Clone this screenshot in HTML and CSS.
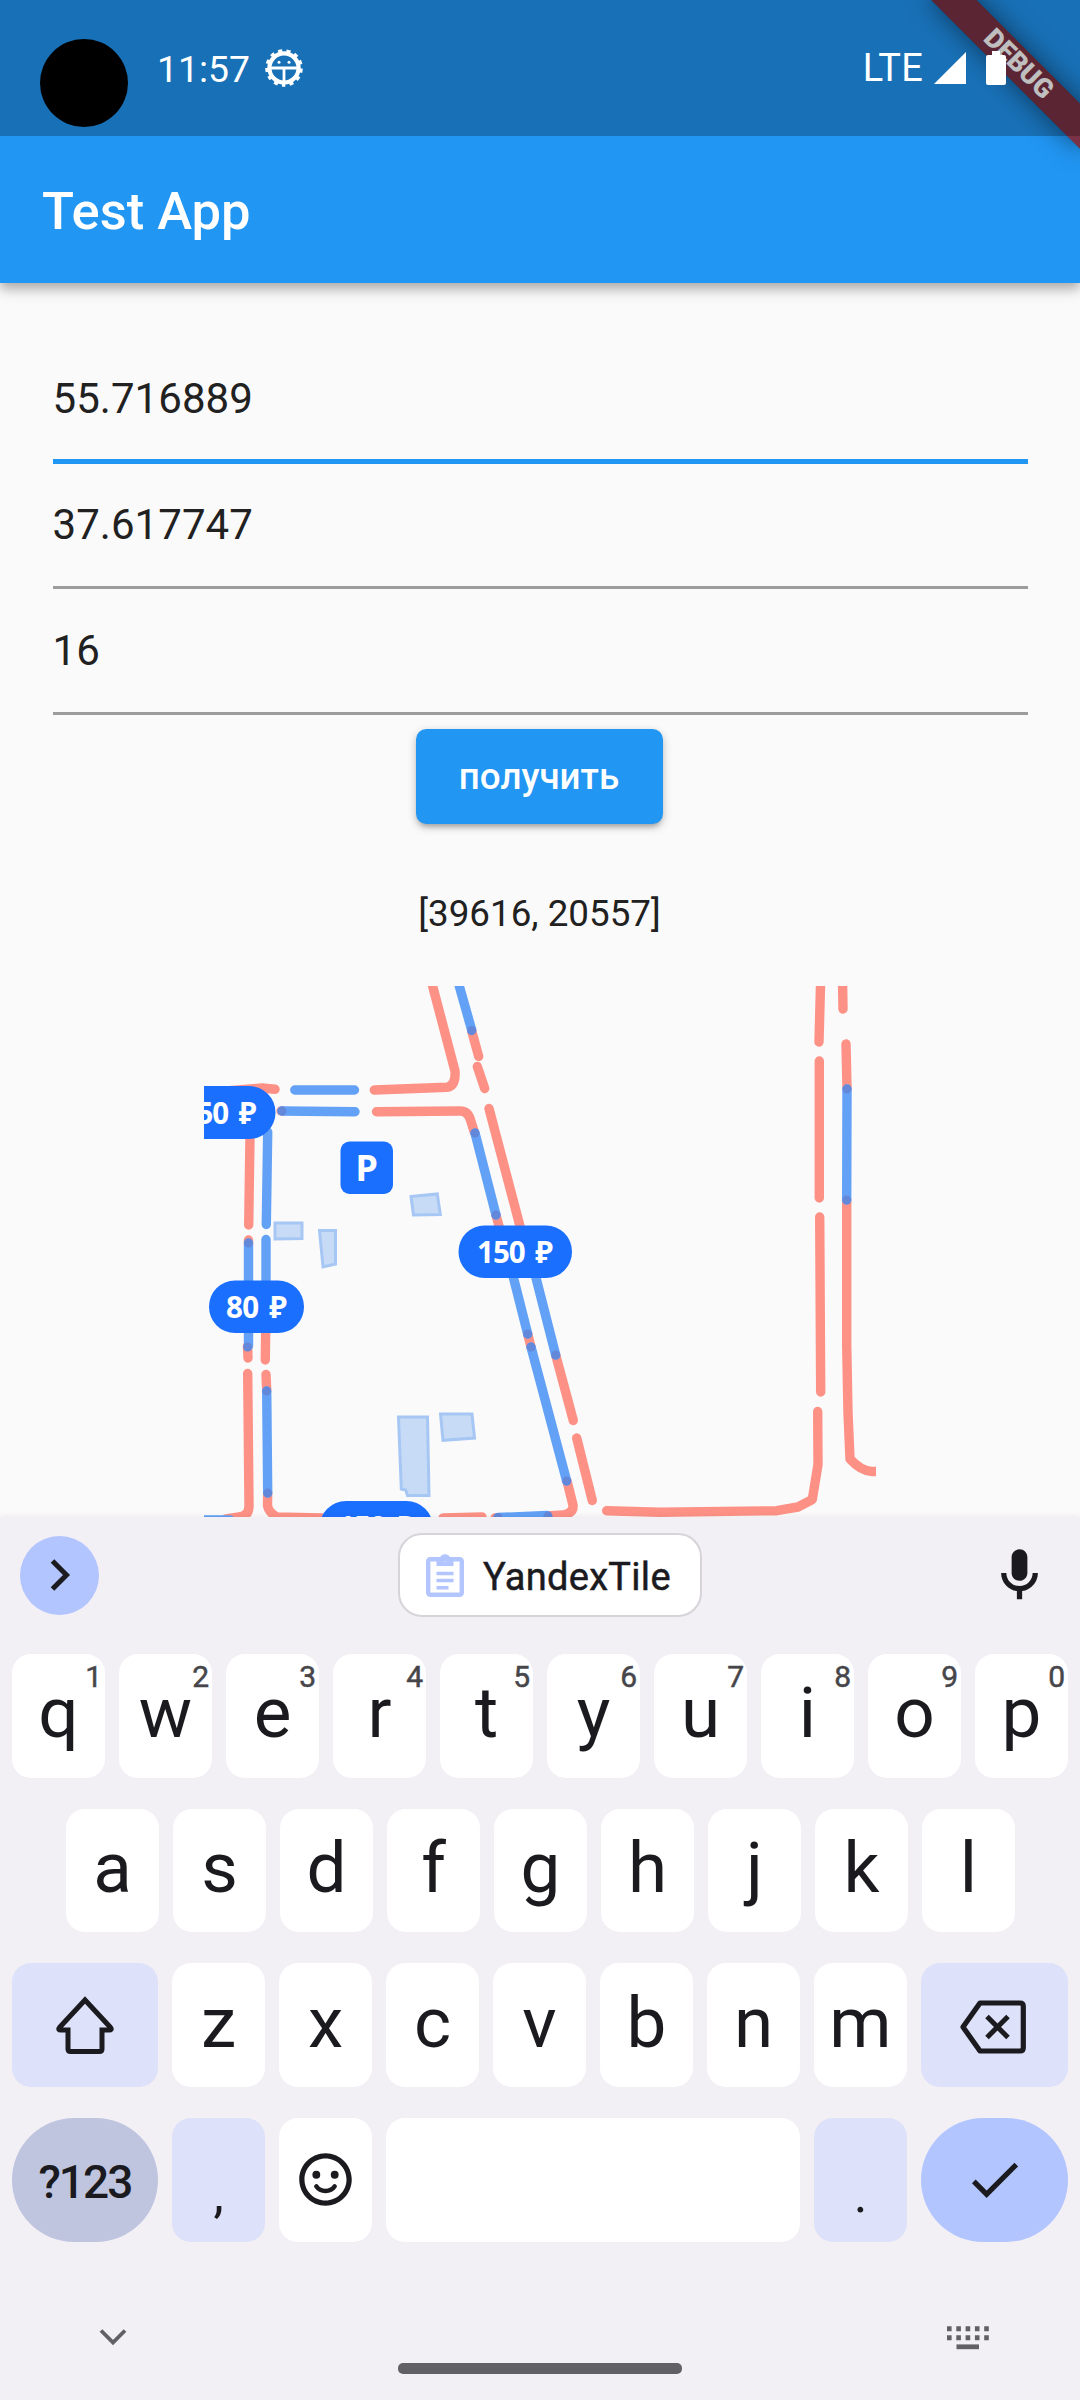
FILE: index.html
```html
<!DOCTYPE html>
<html lang="ru">
<head>
<meta charset="utf-8">
<title>Test App</title>
<link rel="stylesheet" href="styles.css">
</head>
<body>
<div class="screen">
  <header class="header">
    <div class="debug"><span>DEBUG</span></div>
    <div class="statusbar">
      <div class="camera"></div>
      <span class="clock">11:57</span>
      <svg class="gear" viewBox="-19 -19 38 38" width="38" height="38">
        <circle r="14.6" fill="none" stroke="#fff" stroke-width="4.2"/>
        <circle r="17" fill="none" stroke="#fff" stroke-width="3.6" stroke-dasharray="4 4.216" stroke-dashoffset="2" transform="rotate(90)"/>
        <path d="M-13 0H13M0 0V14" stroke="#fff" stroke-width="2.8"/>
        <circle cx="-5" cy="-5.8" r="1.5" fill="#fff"/><circle cx="5" cy="-5.8" r="1.5" fill="#fff"/>
      </svg>
      <span class="lte">LTE</span>
      <svg class="signal" viewBox="0 0 32 32" width="32" height="32"><path d="M32 0V32H0z" fill="#fff"/></svg>
      <svg class="battery" viewBox="0 0 20 34" width="20" height="34"><path d="M6 0h8v4h4q2 0 2 2v26q0 2-2 2H2q-2 0-2-2V6q0-2 2-2h4z" fill="#fff"/></svg>
    </div>
    <h1 class="title">Test App</h1>
  </header>

  <main class="content">
    <div class="field focused">55.716889</div>
    <div class="field">37.617747</div>
    <div class="field">16</div>
    <button class="button">получить</button>
    <p class="result">[39616, 20557]</p>
    <svg class="map" viewBox="204 986 672 531" width="672" height="531">
      <g class="building">
        <path d="M411 1196.500L437.300 1194L440.300 1214.500L413.500 1215z"/>
        <path d="M275 1223H302V1238.500L275 1239z"/>
        <path d="M319.500 1230.500H335.500V1264L323 1267z"/>
        <path d="M398.500 1417H427.500L429 1495.500H407.500L405.700 1490L401.300 1489z"/>
        <path d="M440.500 1414H472L474.500 1438L443 1440.300z"/>
      </g>
      <g class="closed">
        <path d="M430.500 978L455 1071Q456 1086 446.700 1087.300L374.300 1090"/>
        <path d="M471.700 1031L478.700 1056.500M477.300 1066.500L484.700 1088.500"/>
        <path d="M226 1091L262 1088L275 1089.300M281 1111H283"/>
        <path d="M376.500 1111.700L460 1111Q468 1111 470.500 1120L474.300 1132M496 1215L499 1226"/>
        <path d="M489 1108.500L521 1230"/>
        <path d="M250 1136L248.700 1225M248.500 1240V1244M247.500 1346L248 1358M265.700 1330L265.300 1360"/>
        <path d="M247.700 1373.500L249 1506Q249 1516 239 1517L226 1519"/>
        <path d="M266 1374.500L266.700 1390M267.700 1493L267.500 1505Q268 1512 277 1517L322 1518"/>
        <path d="M443 1518L482 1517M495 1518H498M547 1516L563 1515Q574 1513 573 1505L567 1481"/>
        <path d="M527.700 1334L531 1347M555.700 1355L573.300 1420.500M576.700 1438L592.300 1500.500"/>
        <path d="M606.700 1510.700L660 1512.300L776.700 1510.700L798 1507L812.300 1499.500L818 1464.600L817.700 1411.500"/>
        <path d="M820.700 978L819 1042M819.300 1061V1198M819.700 1217L820.700 1392"/>
        <path d="M842.500 978L843 1009M846 1044L847 1088M846.700 1200V1345L848 1413L850 1459Q861 1471 872 1471.500H885"/>
      </g>
      <g class="parking">
        <path d="M457 978L471.700 1030M294.800 1090H354.500M282 1111L355 1111.700M475 1133L496 1215"/>
        <path d="M267.700 1132L266.300 1224.500M266 1239.500V1290M248.500 1243V1346"/>
        <path d="M266.700 1391L267.700 1493M195 1520H230M498 1517.500L547 1515.500"/>
        <path d="M566.700 1481L531 1347M527.700 1334L512 1272M534.500 1272L555.700 1355M847 1089L846.700 1200"/>
      </g>
      <g class="joint">
        <circle cx="471.700" cy="1030.500" r="4.500"/><circle cx="282" cy="1111" r="4.500"/><circle cx="475" cy="1133" r="4.500"/><circle cx="496" cy="1215" r="4.500"/><circle cx="248.500" cy="1243" r="4.500"/><circle cx="247.600" cy="1347" r="4.500"/><circle cx="266.700" cy="1391" r="4.500"/><circle cx="267.700" cy="1493" r="4.500"/><circle cx="566.700" cy="1481" r="4.500"/><circle cx="531" cy="1347" r="4.500"/><circle cx="527.700" cy="1334" r="4.500"/><circle cx="555.700" cy="1355" r="4.500"/><circle cx="847" cy="1089" r="4.500"/><circle cx="846.700" cy="1200" r="4.500"/><circle cx="498" cy="1517.500" r="4.500"/><circle cx="548" cy="1516" r="4.500"/>
      </g>
      <g class="badge">
        <rect x="162" y="1086" width="113.500" height="53" rx="26.500"/>
        <rect x="340.500" y="1141.500" width="52.500" height="52.500" rx="9"/>
        <rect x="458.500" y="1225.500" width="113.500" height="52.500" rx="26"/>
        <rect x="209" y="1280.500" width="95" height="52.500" rx="26"/>
        <rect x="319.500" y="1501" width="113.500" height="53" rx="26.500"/>
      </g>
      <g class="price">
        <text x="180.500" y="1123.500" textLength="76">150 ₽</text>
        <text x="477" y="1263" textLength="76">150 ₽</text>
        <text x="226" y="1318" textLength="61">80 ₽</text>
        <text x="338" y="1538" textLength="76">150 ₽</text>
        <text class="p" x="355.500" y="1181">P</text>
      </g>
    </svg>
  </main>

  <section class="keyboard">
    <div class="toolbar">
      <div class="expand"><svg viewBox="0 0 24 36" width="24" height="36"><path d="M4.500 4L18.500 18L4.500 32" fill="none" stroke="#1b1b1f" stroke-width="5"/></svg></div>
      <div class="chip">
        <svg viewBox="0 0 38 46" width="38" height="46"><rect x="2.200" y="7.200" width="33.600" height="35.600" rx="2" fill="none" stroke="#b2c5ff" stroke-width="4.400"/><path fill-rule="evenodd" d="M10.500 6h3.300a5.500 5.500 0 0 1 10.400 0h3.300v8h-17zM19 5.200a2.200 2.200 0 1 0 0 4.400a2.200 2.200 0 1 0 0-4.400z" fill="#b2c5ff"/><path d="M10.500 21.500h17M10.500 28.500h17M10.500 35.700h12" stroke="#b2c5ff" stroke-width="3.600"/></svg>
        <span>YandexTile</span>
      </div>
      <svg class="mic" viewBox="0 0 24 24" width="63" height="63"><path d="M12 14c1.660 0 3-1.340 3-3V5c0-1.660-1.340-3-3-3S9 3.340 9 5v6c0 1.660 1.340 3 3 3zM17 11c0 2.760-2.240 5-5 5s-5-2.240-5-5H5c0 3.530 2.610 6.430 6 6.920V21h2v-3.080c3.390-.49 6-3.390 6-6.920h-2z" fill="#1b1b1f"/></svg>
    </div>
    <div class="row">
      <div class="key">q<i>1</i></div><div class="key">w<i>2</i></div><div class="key">e<i>3</i></div><div class="key">r<i>4</i></div><div class="key">t<i>5</i></div><div class="key">y<i>6</i></div><div class="key">u<i>7</i></div><div class="key">i<i>8</i></div><div class="key">o<i>9</i></div><div class="key">p<i>0</i></div>
    </div>
    <div class="row inset">
      <div class="key">a</div><div class="key">s</div><div class="key">d</div><div class="key">f</div><div class="key">g</div><div class="key">h</div><div class="key">j</div><div class="key">k</div><div class="key">l</div>
    </div>
    <div class="row">
      <div class="key wide tint shift"><svg viewBox="0 0 62 60" width="62" height="60"><path d="M31 5L5.500 32.500Q3.500 35 7 35H14V54Q14 56.500 16.500 56.500H45.500Q48 56.500 48 54V35H55Q58.500 35 56.500 32.500z" fill="none" stroke="#1b1b1f" stroke-width="5"/></svg></div>
      <div class="key">z</div><div class="key">x</div><div class="key">c</div><div class="key">v</div><div class="key">b</div><div class="key">n</div><div class="key">m</div>
      <div class="key wide tint backspace"><svg viewBox="0 0 66 54" width="66" height="54"><path d="M20 3H60Q63.300 3 63.300 6.300V47.700Q63.300 51 60 51H20L3 27z" fill="none" stroke="#1b1b1f" stroke-width="5.200" stroke-linejoin="round"/><path d="M27 16.500L48 37.500M48 16.500L27 37.500" stroke="#1b1b1f" stroke-width="5"/></svg></div>
    </div>
    <div class="row">
      <div class="key wide symbols">?123</div>
      <div class="key tint punct">,</div>
      <div class="key"><svg viewBox="0 0 24 24" width="63" height="63"><path d="M11.990 2C6.470 2 2 6.480 2 12s4.470 10 9.990 10C17.520 22 22 17.520 22 12S17.520 2 11.990 2zM12 20c-4.420 0-8-3.580-8-8s3.580-8 8-8 8 3.580 8 8-3.580 8-8 8z" fill="#1b1b1f"/><circle cx="8.500" cy="10.200" r="1.500" fill="#1b1b1f"/><circle cx="15.500" cy="10.200" r="1.500" fill="#1b1b1f"/><path d="M8.500 14.600Q9.700 16.400 12 16.400T15.500 14.600" fill="none" stroke="#1b1b1f" stroke-width="1.700" stroke-linecap="round"/></svg></div>
      <div class="key space"></div>
      <div class="key tint punct">.</div>
      <div class="key wide enter"><svg viewBox="0 0 24 24" width="63" height="63"><path d="M9 16.170L4.830 12l-1.420 1.410L9 19 21 7l-1.410-1.410z" fill="#1b1b1f"/></svg></div>
    </div>
    <div class="navbar">
      <svg viewBox="0 0 28 18" width="28" height="18"><path d="M2 2.500L14 14.500L26 2.500" fill="none" stroke="#616163" stroke-width="3.800"/></svg>
      <div class="handle"></div>
      <svg class="ime" viewBox="0 0 42 24" width="42" height="24"><path d="M0 2.800H42M0 11.800H42" stroke="#616163" stroke-width="5" stroke-dasharray="4.600 4.700"/><path d="M9.500 20.800H32" stroke="#616163" stroke-width="4.800"/></svg>
    </div>
  </section>
</div>
</body>
</html>
```
FILE: styles.css
```css
* { box-sizing: border-box; }
body { margin: 0; background: #fafafa; font-family: Roboto, "Noto Sans", sans-serif; }
.screen { width: 1080px; height: 2400px; display: flex; flex-direction: column; overflow: hidden; background: #fafafa; }

.header { position: relative; z-index: 1; flex: none; height: 283px; background: #2196f3; box-shadow: 0 5px 10px rgba(0,0,0,.24), 0 9px 14px rgba(0,0,0,.1); clip-path: inset(0 0 -40px 0); }
.statusbar { position: relative; height: 136px; display: flex; align-items: center; padding: 0 74px 0 40px; background: rgba(0,0,0,.25); color: #fff; font-size: 37.3px; }
.camera { flex: none; width: 88px; height: 88px; margin: 30px 29px 0 0; border-radius: 50%; background: #000; }
.clock { width: 93px; margin-right: 15px; padding-top: 1px; }
.gear { margin-right: auto; }
.lte { margin-right: 11px; font-size: 38px; letter-spacing: .2px; }
.signal { margin-right: 20px; }
.title { margin: 0; padding: 2px 0 0 42px; font-size: 52.5px; line-height: 147px; font-weight: 500; color: #fff; }

/* corner ribbon */
.debug { position: absolute; top: 47px; left: 912px; width: 210px; height: 31.5px; padding-left: 4px; background: linear-gradient(rgba(183,28,28,.63), rgba(183,28,28,.63)), rgba(0,0,0,.42); box-shadow: 0 0 26px rgba(0,0,0,.5); transform: rotate(45deg); color: #fff; font-size: 26.8px; line-height: 31.5px; font-weight: 900; text-align: center; }

.content { flex: none; height: 1234px; display: flex; flex-direction: column; align-items: center; padding-top: 54px; overflow: hidden; }
.field { flex: none; width: 975px; height: 126px; padding-top: 37px; border-bottom: 3px solid #9c9c9c; font-size: 42px; line-height: 50px; letter-spacing: .05px; color: #212121; }
.field.focused { height: 127px; margin-bottom: -1px; padding-top: 37px; border-bottom: 5px solid #2196f3; }
.button { flex: none; width: 247px; height: 95px; margin: 14px 1px 0 0; padding: 1px 1px 0 0; border: 0; border-radius: 10.5px; background: #2196f3; box-shadow: 0 5px 5px -3px rgba(0,0,0,.2), 0 3px 8px rgba(0,0,0,.25); color: #fff; font: 500 36.75px/94px Roboto, sans-serif; }
.result { margin: 68px 1px 0 0; font-size: 36.75px; line-height: 44px; color: #212121; }
.map { flex: none; display: block; margin-top: 50px; }
.building path { fill: #c8dbf6; stroke: #a6c7f3; stroke-width: 3; }
.closed path, .parking path { fill: none; stroke-width: 9.4; stroke-linecap: round; stroke-linejoin: round; }
.closed path { stroke: #fd9186; }
.parking path { stroke: #62a1f6; }
.joint { fill: #6488d9; }
.badge { fill: #1b6fff; }
.price { fill: #fff; font: 700 29.5px "Noto Sans", "Open Sans", sans-serif; word-spacing: 4px; }
.price .p { font-size: 36px; font-weight: 700; }

.keyboard { flex: 1; background: #f2eff5; box-shadow: 0 0 6px rgba(0,0,0,.08); position: relative; padding: 0 12px; color: #1b1b1f; }
.toolbar { height: 137px; padding: 0 17px 21px 8px; display: flex; align-items: center; justify-content: space-between; }
.expand { width: 79px; height: 79px; border-radius: 50%; background: #b2c5ff; display: flex; align-items: center; justify-content: center; }
.chip { width: 304px; height: 84px; margin-left: 13px; border: 2.6px solid #d6d4d9; border-radius: 24px; background: #fff; display: flex; align-items: center; padding-left: 26px; gap: 19px; font-size: 38px; letter-spacing: .3px; -webkit-text-stroke: .5px #1b1b1f; }
.chip span { padding-top: 3px; }
.row { display: flex; gap: 14px; height: 123.7px; margin-bottom: 31px; }
.inset { padding: 0 54px; }
.key { position: relative; flex: 0 0 93px; height: 100%; display: flex; align-items: center; justify-content: center; border-radius: 19px; background: #fff; font-size: 71px; line-height: 120px; }
.row .key:not(.wide):not(.punct):not(:has(svg)) { padding-bottom: 5px; }
.key i { position: absolute; top: 8px; right: 3px; font: 400 30px/30px Roboto, sans-serif; color: #46464a; -webkit-text-stroke: .5px #46464a; }
.wide { flex-basis: 146px; }
.wide:last-child { flex-basis: 147px; }
.tint { background: #dde1f9; }
.backspace { padding: 4px 3px 0 0; }
.space { flex: 1 !important; }
.symbols { border-radius: 62px; background: #c0c5df; font-size: 46px; font-weight: 500; letter-spacing: -1.9px; padding-top: 4px; }
.punct { font-size: 52px; padding-top: 30px; }
.enter { border-radius: 62px; background: #b2c5ff; }
.navbar { display: flex; justify-content: space-between; align-items: flex-start; padding: 54px 79px 0 87px; }
.navbar svg { margin-top: 1px; }
.handle { width: 284px; height: 11px; margin-top: 36px; margin-left: 6px; border-radius: 5px; background: #616163; }
.navbar .ime { margin-top: -1px; }
```
